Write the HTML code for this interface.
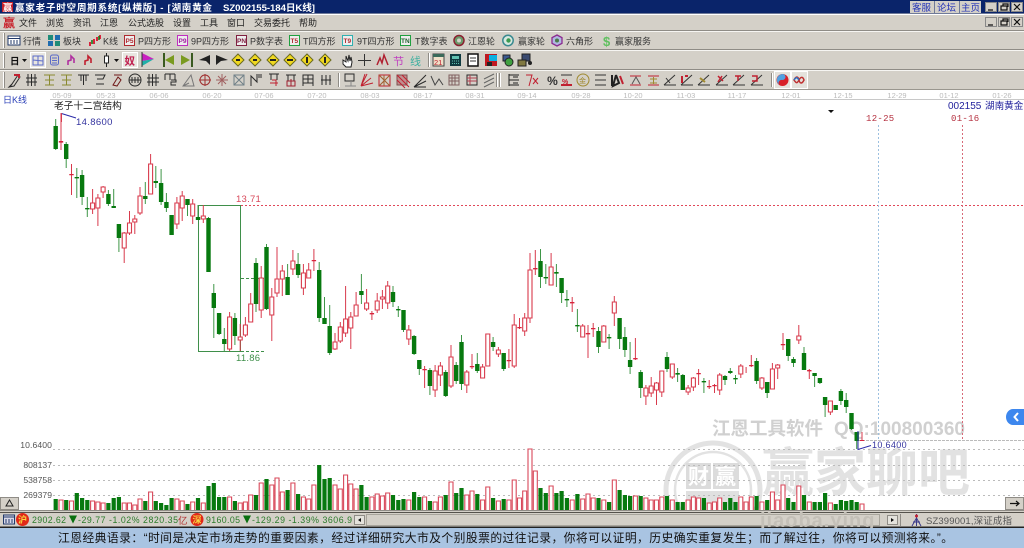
<!DOCTYPE html>
<html><head><meta charset="utf-8"><title>赢家老子时空周期系统</title>
<style>
html,body{margin:0;padding:0;background:#fff;width:1024px;height:548px;overflow:hidden}
svg{display:block;position:absolute;left:0;top:0}
text{font-family:"Liberation Sans","WenQuanYi Zen Hei","Noto Sans CJK SC",sans-serif}
.m{font-size:9px;fill:#222}
.t{font-size:9px;fill:#333}
.d{font-size:7.5px;fill:#bbb;text-anchor:middle;font-family:"Liberation Sans",sans-serif}
.mono{font-family:"Liberation Mono","WenQuanYi Zen Hei",monospace}
</style></head><body>
<svg width="1024" height="548" viewBox="0 0 1024 548" xmlns="http://www.w3.org/2000/svg">
<rect width="1024" height="548" fill="#fff"/>
<!-- watermark -->
<g fill="none" stroke="#e2e2e2">
<circle cx="713" cy="490" r="47" stroke-width="5"/><circle cx="713" cy="490" r="38" stroke-width="2.5"/>
</g>
<rect x="686" y="463" width="25" height="26" fill="#dcdcdc"/><rect x="713" y="463" width="26" height="26" fill="#dcdcdc"/>
<text x="688" y="484" font-size="21" fill="#fff" font-weight="bold">财</text>
<text x="715" y="484" font-size="21" fill="#fff" font-weight="bold">赢</text>
<rect x="686" y="491" width="53" height="20" fill="#e0e0e0"/>
<text x="762" y="491" font-size="52" font-weight="bold" fill="#e2e2e2">赢家聊吧</text>
<text x="712" y="435" font-size="18.5" font-weight="bold" fill="#d0d0d0">江恩工具软件</text>
<text x="834" y="435" font-size="19" font-weight="bold" fill="#d0d0d0">QQ:100800360</text>

<!-- grid -->
<g stroke="#bbb" stroke-dasharray="2 3" fill="none">
<path d="M53 449.5H1024M53 465.5H1024M53 480.5H1024M53 495.5H1024"/>
</g>
<path d="M858 440.5H1024" stroke="#bbb" stroke-dasharray="3 1"/>
<path d="M241 205.5H1024" stroke="#e0485a" stroke-dasharray="2 2"/>
<path d="M878.5 125V440" stroke="#9cc0e0" stroke-dasharray="2 2"/>
<path d="M962.5 125V440" stroke="#d86a78" stroke-dasharray="2 2"/>
<path d="M198.5 205.5H240.5V351.5H198.5Z" fill="none" stroke="#3f8f4a"/>
<path d="M241 278.5H266M241 351.5H266" stroke="#3f8f4a" stroke-dasharray="3 2"/>

<!-- candles: green wicks -->
<path fill="none" stroke="#3f9648" stroke-width="1" d="M55.7 119V150M66.2 142V168M76.8 168V198M82.1 170V205M87.3 197V217M108.4 190V206M113.7 189V208M118.9 224V252M145.3 182V204M155.8 166V188M161.1 169V205M166.4 193V212M171.6 215V235M187.5 199V216M198 205V220M208.5 217V272M213.8 284V338M219.1 313V335M224.3 328V351M234.9 313V345M256 258V312M266.5 244V310M287.6 264V295M298.1 253V278M319.2 262V322M324.5 297V324M329.7 305V355M361.4 274V304M393 286V307M398.3 306V317M403.5 310V332M414.1 335V355M419.3 360V375M429.9 368V395M445.7 370V397M456.2 362V384M461.5 335V390M477.3 353V373M493.1 337V351M503.7 353V371M540.5 249V288M545.8 264V284M556.4 264V287M561.6 278V303M566.9 290V307M577.4 309V332M598.5 327V353M609.1 334V349M619.6 318V349M624.9 327V357M630.1 342V374M640.7 370V398M667 352V372M677.6 368V382M682.8 374V390M703.9 378V393M725 375V385M730.3 368V374M735.5 375V384M756.6 358V384M767.2 382V398M788.2 339V361M793.5 357V367M804 347V370M814.6 373V387M819.9 378V384M825.1 397V417M835.7 405V410M840.9 389V405M846.2 393V413M851.5 413V430M856.7 432V449"/>
<!-- green bodies -->
<path fill="none" stroke="#07790f" stroke-width="4.4" d="M55.7 126V149M66.2 144V159M76.8 177V178.4M82.1 175V197M87.3 208V209.4M108.4 194V204M113.7 206V208M118.9 224V238M145.3 196V199M155.8 181V183M161.1 183V202M166.4 202V208M171.6 215V235M187.5 199V205M198 217V220M208.5 218V272M213.8 293V308M219.1 313V334M224.3 339V344M234.9 318V336M256 263V304M266.5 247V309M287.6 277V295M298.1 264V275M319.2 270V318M324.5 318V324M329.7 326V353M361.4 291V295M393 292V302M398.3 309V310.4M403.5 310V330M414.1 336V354M419.3 360V369M429.9 370V386M445.7 372V396M456.2 365V381M461.5 342V384M477.3 364V371M493.1 342V347M503.7 353V369M540.5 261V277M545.8 277V278.4M556.4 272V273.6M561.6 278V293M566.9 299V300.4M577.4 325V326.4M598.5 331V347M609.1 337V338.4M619.6 318V339M624.9 337V350M630.1 360V367M640.7 372V388M667 357V369M677.6 373V374.6M682.8 375V390M703.9 381V382.4M725 376V380M730.3 371V373M735.5 378V379.4M756.6 361V381M767.2 382V393M788.2 339V356M793.5 359V363M804 353V370M814.6 373V376M819.9 378V383M825.1 397V405M835.7 405V410M840.9 391V401M846.2 400V407M851.5 413V429M856.7 432V441"/>
<!-- red wicks -->
<path fill="none" stroke="#d83a4c" stroke-width="1" d="M61 113V150M71.5 164V195M92.6 189V214M97.9 194V226M103.1 186V198M124.2 232V263M129.5 211V235M134.8 215V234M140 187V215M150.6 154V194M176.9 197V229M182.2 191V221M192.7 199V224M203.3 205V223M229.6 312V351M240.2 324V351M245.4 317V337M250.7 293V322M261.2 266V318M271.8 288V341M277 247V297M282.3 265V296M292.9 250V275M303.4 264V295M308.7 263V278M313.9 249V271M335 333V350M340.3 322V343M345.6 286V337M350.8 312V349M356.1 292V316M366.6 289V311M371.9 311V320M377.2 293V313M382.4 290V309M387.7 281V309M408.8 325V345M424.6 366V388M435.1 365V397M440.4 362V386M451 345V388M466.8 370V393M472 354V369M482.6 364V378M487.8 334V366M498.4 347V357M508.9 349V368M514.2 314V368M519.5 318V329M524.7 313V336M530 253V323M535.3 250V275M551.1 253V285M572.2 297V312M582.7 324V337M588 325V358M593.2 323V337M603.8 325V342M614.3 296V326M635.4 338V360M645.9 385V405M651.2 377V397M656.5 382V405M661.8 371V397M672.3 364V379M688.1 385V395M693.4 377V391M698.6 369V385M709.2 380V389M714.5 384V393M719.7 373V395M740.8 364V378M746.1 367V373M751.3 355V367M761.9 377V390M772.4 363V389M777.7 364V379M783 333V350M798.8 325V344M809.3 369V379M830.4 401V415M862 432V441"/>
<!-- red doji -->
<path fill="none" stroke="#d8243c" stroke-width="4.4" d="M61 141V142.6M71.5 174V175.2M313.9 260V261.2M371.9 313V314.4M424.6 369V370.2M472 366V367.2M508.9 360V361.2M519.5 327V328.2M535.3 268V269.4M572.2 302V303.4M588 333V334.4M593.2 328V329.2M635.4 358V359.4M698.6 373V374.2M709.2 386V387.2M714.5 385V386.2M751.3 365V366.2M783 344V345.2M809.3 370V371.4M862 440V441"/>
<!-- red hollow bodies -->
<path fill="#fff" stroke="#d83a4c" stroke-width="1.1" d="M90.6 203h4V209h-4zM95.9 198h4V208h-4zM101.1 187h4V192h-4zM122.2 233h4V248h-4zM127.5 223h4V233h-4zM132.8 219h4V222h-4zM138 196h4V213h-4zM148.6 164h4V194h-4zM174.9 203h4V224h-4zM180.2 196h4V208h-4zM190.7 204h4V216h-4zM201.3 216h4V219h-4zM227.6 317h4V349h-4zM238.2 337h4V340h-4zM243.4 325h4V335h-4zM248.7 304h4V322h-4zM259.2 278h4V310h-4zM269.8 297h4V315h-4zM275 279h4V293h-4zM280.3 271h4V279h-4zM290.9 261h4V269h-4zM301.4 273h4V288h-4zM306.7 270h4V278h-4zM333 342h4V349h-4zM338.3 327h4V341h-4zM343.6 319h4V333h-4zM348.8 317h4V328h-4zM354.1 305h4V316h-4zM364.6 303h4V309h-4zM375.2 301h4V310h-4zM380.4 297h4V299h-4zM385.7 286h4V303h-4zM406.8 330h4V339h-4zM433.1 371h4V390h-4zM438.4 366h4V375h-4zM449 357h4V386h-4zM464.8 372h4V385h-4zM480.6 367h4V378h-4zM485.8 334h4V366h-4zM496.4 350h4V354h-4zM512.2 325h4V366h-4zM522.7 318h4V331h-4zM528 270h4V318h-4zM549.1 267h4V285h-4zM580.7 326h4V337h-4zM601.8 326h4V342h-4zM612.3 302h4V313h-4zM643.9 388h4V396h-4zM649.2 386h4V393h-4zM654.5 383h4V390h-4zM659.8 371h4V392h-4zM670.3 364h4V377h-4zM686.1 388h4V392h-4zM691.4 378h4V387h-4zM717.7 375h4V390h-4zM738.8 366h4V374h-4zM759.9 378h4V388h-4zM770.4 369h4V389h-4zM775.7 365h4V368h-4zM796.8 336h4V340h-4zM828.4 401h4V412h-4z"/>
<!-- volume green -->
<path fill="none" stroke="#07790f" stroke-width="4.2" d="M55.7 510V499M66.2 510V500M76.8 510V493M82.1 510V498M87.3 510V500M108.4 510V503M113.7 510V498M118.9 510V497M145.3 510V501M155.8 510V501M161.1 510V503M166.4 510V505M171.6 510V498M187.5 510V504M198 510V498M208.5 510V486M213.8 510V483M219.1 510V497M224.3 510V497M234.9 510V501M256 510V495M266.5 510V479M287.6 510V490M298.1 510V494M319.2 510V465M324.5 510V479M329.7 510V478M361.4 510V485M366.6 510V497M393 510V495M398.3 510V500M403.5 510V499M414.1 510V492M419.3 510V497M429.9 510V501M445.7 510V495M456.2 510V493M461.5 510V488M477.3 510V494M493.1 510V498M503.7 510V499M540.5 510V488M545.8 510V493M556.4 510V493M561.6 510V491M566.9 510V498M577.4 510V494M598.5 510V498M609.1 510V502M619.6 510V490M624.9 510V495M630.1 510V496M640.7 510V496M667 510V496M677.6 510V502M682.8 510V502M703.9 510V498M725 510V502M730.3 510V498M735.5 510V502M756.6 510V496M767.2 510V500M788.2 510V498M793.5 510V502M804 510V495M814.6 510V502M819.9 510V502M825.1 510V493M835.7 510V504M840.9 510V500M846.2 510V501M851.5 510V500M856.7 510V502"/>
<!-- volume red -->
<path fill="#fff" stroke="#d8485a" stroke-width="1.1" d="M59 510V500h4V510M69.5 510V501h4V510M90.6 510V501h4V510M95.9 510V502h4V510M101.1 510V503h4V510M122.2 510V503h4V510M127.5 510V503h4V510M132.8 510V505h4V510M138 510V499h4V510M148.6 510V492h4V510M174.9 510V499h4V510M180.2 510V501h4V510M190.7 510V502h4V510M201.3 510V503h4V510M227.6 510V497h4V510M238.2 510V503h4V510M243.4 510V502h4V510M248.7 510V495h4V510M259.2 510V483h4V510M269.8 510V485h4V510M275 510V478h4V510M280.3 510V492h4V510M290.9 510V483h4V510M301.4 510V497h4V510M306.7 510V499h4V510M311.9 510V485h4V510M333 510V485h4V510M338.3 510V489h4V510M343.6 510V475h4V510M348.8 510V484h4V510M354.1 510V489h4V510M369.9 510V497h4V510M375.2 510V494h4V510M380.4 510V496h4V510M385.7 510V493h4V510M406.8 510V500h4V510M422.6 510V497h4V510M433.1 510V502h4V510M438.4 510V497h4V510M449 510V482h4V510M464.8 510V495h4V510M470 510V491h4V510M480.6 510V500h4V510M485.8 510V487h4V510M496.4 510V501h4V510M506.9 510V500h4V510M512.2 510V480h4V510M517.5 510V498h4V510M522.7 510V491h4V510M528 510V449h4V510M533.3 510V471h4V510M549.1 510V486h4V510M570.2 510V500h4V510M580.7 510V499h4V510M586 510V494h4V510M591.2 510V498h4V510M601.8 510V500h4V510M612.3 510V480h4V510M633.4 510V496h4V510M643.9 510V498h4V510M649.2 510V500h4V510M654.5 510V500h4V510M659.8 510V497h4V510M670.3 510V500h4V510M686.1 510V500h4V510M691.4 510V497h4V510M696.6 510V498h4V510M707.2 510V503h4V510M712.5 510V502h4V510M717.7 510V498h4V510M738.8 510V497h4V510M744.1 510V502h4V510M749.3 510V497h4V510M759.9 510V502h4V510M770.4 510V492h4V510M775.7 510V500h4V510M781 510V485h4V510M796.8 510V486h4V510M807.3 510V502h4V510M828.4 510V503h4V510M860 510V504h4V510"/>

<!-- chart labels -->
<text x="54" y="109" font-size="9.7" fill="#222">老子十二宫结构</text>
<path d="M61.5 113.5L76 118" stroke="#2a2aa8" fill="none"/>
<path d="M61.5 113.5V122" stroke="#d83a4c"/>
<text x="76" y="125" font-size="9.5" fill="#33339f" letter-spacing=".35">14.8600</text>
<text x="948" y="109" font-size="10" fill="#22229c">002155</text>
<text x="985" y="109" font-size="9.6" fill="#22229c">湖南黄金</text>
<path d="M828 110h6l-3 3z" fill="#111"/>
<text x="866" y="121" font-size="9" fill="#b5303f" class="mono" letter-spacing=".3">12-25</text>
<text x="951" y="121" font-size="9" fill="#b5303f" class="mono" letter-spacing=".3">01-16</text>
<text x="236" y="202" font-size="9.5" fill="#d8485a" letter-spacing=".25">13.71</text>
<text x="236" y="361" font-size="9.5" fill="#3f8f4a" letter-spacing=".25">11.86</text>
<path d="M858 431V449.5L871 445.5" stroke="#2a2aa8" fill="none"/>
<text x="872" y="448" font-size="9" fill="#33339f" letter-spacing=".35">10.6400</text>
<g font-size="8.6" fill="#555" text-anchor="end">
<text x="52" y="448" letter-spacing=".1">10.6400</text>
<text x="52" y="468">808137</text>
<text x="52" y="483">538758</text>
<text x="52" y="498">269379</text>
</g>
<!-- blue tab -->
<path d="M1024 409h-11a7 8 0 0 0-7 8a7 8 0 0 0 7 8h11z" fill="#3d87ee"/>
<path d="M1018 413l-3.5 4 3.5 4" stroke="#fff" stroke-width="2" fill="none"/>

<!-- axis -->
<rect x="0" y="89" width="1024" height="10" fill="#fff"/>
<path d="M50 99.5H1024" stroke="#c8c8c8"/>
<text x="3" y="103" font-size="9" fill="#2a3fb8">日K线</text>
<g class="dd">
<text class="d" x="62" y="98">05-09</text><text class="d" x="106" y="98">05-23</text><text class="d" x="159" y="98">06-06</text><text class="d" x="212" y="98">06-20</text><text class="d" x="264" y="98">07-06</text><text class="d" x="317" y="98">07-20</text><text class="d" x="370" y="98">08-03</text><text class="d" x="423" y="98">08-17</text><text class="d" x="475" y="98">08-31</text><text class="d" x="527" y="98">09-14</text><text class="d" x="581" y="98">09-28</text><text class="d" x="633" y="98">10-20</text><text class="d" x="686" y="98">11-03</text><text class="d" x="737" y="98">11-17</text><text class="d" x="791" y="98">12-01</text><text class="d" x="843" y="98">12-15</text><text class="d" x="897" y="98">12-29</text><text class="d" x="949" y="98">01-12</text><text class="d" x="1002" y="98">01-26</text>
</g>

<!-- title bar -->
<rect x="0" y="0" width="1024" height="13.5" fill="#0a246a"/>
<rect x="2" y="2" width="11" height="10" fill="#c8202a"/>
<text x="3" y="11" font-size="9.5" fill="#fff" font-weight="bold">赢</text>
<text x="15" y="11" font-size="9.6" fill="#fff" font-weight="bold" textLength="197" lengthAdjust="spacing">赢家老子时空周期系统[纵横版] - [湖南黄金</text>
<text x="223" y="11" font-size="9.6" fill="#fff" font-weight="bold" textLength="92" lengthAdjust="spacing">SZ002155-184日K线]</text>
<g font-size="9.5" fill="#2232b8">
<rect x="910" y="1" width="24" height="12" fill="#d4d0c8"/><text x="912" y="11">客服</text>
<rect x="934.5" y="1" width="25" height="12" fill="#d4d0c8"/><text x="937" y="11">论坛</text>
<rect x="960" y="1" width="21" height="12" fill="#d4d0c8"/><text x="961" y="11">主页</text>
</g>
<!-- menu bar -->
<rect x="0" y="13.5" width="1024" height="76" fill="#d4d0c8"/>
<path d="M0 14.500H1024" stroke="#fff"/>
<path d="M0 30.500H1024M0 49.500H1024M0 69.500H1024" stroke="#8f8c86"/>
<path d="M0 31.500H1024M0 50.500H1024M0 70.500H1024" stroke="#f6f5f2"/>
<path d="M0 89.500H1024" stroke="#9a978f"/>
<g fill="#d4d0c8" stroke="#888">
<rect x="985.500" y="2.500" width="11" height="9"/><rect x="998.500" y="2.500" width="11" height="9"/><rect x="1011.500" y="2.500" width="11" height="9"/>
<rect x="985.500" y="17.500" width="11" height="9"/><rect x="998.500" y="17.500" width="11" height="9"/><rect x="1011.500" y="17.500" width="11" height="9"/>
</g>
<g stroke="#111" fill="none" stroke-width="1.2">
<path d="M988 10h5M988 25h5M1001 6h6v4h-6zM1003 6V4h5v3M1001 21h6v4h-6zM1003 21V19h5v3M1014 4l6 6M1020 4l-6 6M1014 19l6 6M1020 19l-6 6"/>
</g>
<text x="3" y="27" font-size="12" fill="#c8202a" font-weight="bold">赢</text>
<g class="menu">
<text class="m" x="19" y="26">文件</text><text class="m" x="46" y="26">浏览</text><text class="m" x="73" y="26">资讯</text><text class="m" x="100" y="26">江恩</text><text class="m" x="128" y="26">公式选股</text><text class="m" x="173" y="26">设置</text><text class="m" x="200" y="26">工具</text><text class="m" x="227" y="26">窗口</text><text class="m" x="254" y="26">交易委托</text><text class="m" x="299" y="26">帮助</text>
</g>
<!-- toolbar grips -->
<path d="M3.500 33V48M3.500 53V68M3.500 72V88" stroke="#fff"/><path d="M4.500 33V48M4.500 53V68M4.500 72V88" stroke="#8f8c86"/>
<!-- toolbar 1 -->
<rect x="8" y="36" width="12" height="9" fill="#fff" stroke="#223a6a"/><path d="M8 38.500h12M11 40v4M14 40v4M17 40v4" stroke="#223a6a"/>
<text class="t" x="23" y="44.500">行情</text>
<rect x="48" y="35" width="5" height="5" fill="#1f8c78"/><rect x="55" y="35" width="5" height="5" fill="#1f6cb0"/><rect x="48" y="41" width="5" height="5" fill="#1f6cb0"/><rect x="55" y="41" width="5" height="5" fill="#1f8c78"/>
<text class="t" x="63" y="44.500">板块</text>
<path d="M90 42v4M94 39v5M97 37v4M100 35v4" stroke="#d8243c" stroke-width="2"/><path d="M92 40v4M99 36v4" stroke="#07790f" stroke-width="1.5"/>
<text class="t" x="103" y="44.500">K线</text>
<g font-size="6.500" font-weight="bold">
<rect x="124.500" y="35.500" width="10" height="10" fill="#eee" stroke="#b02a30"/><text x="125.500" y="43" fill="#b02a30">P5</text>
<rect x="177.500" y="35.500" width="10" height="10" fill="#eee" stroke="#c030c0"/><text x="178.500" y="43" fill="#a020a0">P9</text>
<rect x="236.500" y="35.500" width="10" height="10" fill="#eee" stroke="#802040"/><text x="237" y="43" fill="#802040">PN</text>
<rect x="289.500" y="35.500" width="10" height="10" fill="#eee" stroke="#20a040"/><text x="290.500" y="43" fill="#b02a30">T5</text>
<rect x="342.500" y="35.500" width="10" height="10" fill="#eee" stroke="#30b0b0"/><text x="343.500" y="43" fill="#b02a30">T9</text>
<rect x="400.500" y="35.500" width="10" height="10" fill="#eee" stroke="#20a040"/><text x="401" y="43" fill="#206030">TN</text>
</g>
<text class="t" x="138" y="44.500">P四方形</text>
<text class="t" x="191" y="44.500">9P四方形</text>
<text class="t" x="250" y="44.500">P数字表</text>
<text class="t" x="303" y="44.500">T四方形</text>
<text class="t" x="357" y="44.500">9T四方形</text>
<text class="t" x="415" y="44.500">T数字表</text>
<circle cx="459" cy="40.500" r="5" fill="#6a9a6a" stroke="#8a2030" stroke-width="1.5"/><circle cx="459" cy="40.500" r="2" fill="#d4d0c8"/>
<text class="t" x="468" y="44.500">江恩轮</text>
<circle cx="508" cy="40.500" r="5.2" fill="#d8e8e0" stroke="#3a8a90" stroke-width="1.5"/><circle cx="508.500" cy="40.500" r="2.2" fill="#3a9a50"/>
<text class="t" x="518" y="44.500">赢家轮</text>
<path d="M557 35l5 2.700v5.600l-5 2.700-5-2.700v-5.600z" fill="#b0b8e0" stroke="#8a2a90" stroke-width="1.3"/><circle cx="557" cy="40.500" r="2" fill="#4a7a4a"/>
<text class="t" x="566" y="44.500">六角形</text>
<text x="603" y="46" font-size="13" font-weight="bold" fill="#60c060">$</text>
<text class="t" x="615" y="44.500">赢家服务</text>

<!-- toolbar 2 -->
<text x="10" y="64.500" font-size="9.500" fill="#111" font-weight="bold">日</text>
<path d="M22 59h5l-2.500 3z" fill="#111"/>
<rect x="30.500" y="52.500" width="15" height="15" fill="#e8e6e0" stroke="#fff"/>
<path d="M33 56h10v9h-10zM33 60l10 1M38 56v9" fill="none" stroke="#5a6ac8"/>
<rect x="50.500" y="55" width="8" height="10" rx="2" fill="none" stroke="#5a6ac8"/><path d="M52 58h5M52 60.500h5M52 63h5" stroke="#5a6ac8"/>
<path d="M68 65v-4l3-1v-4l3 3v4" fill="none" stroke="#b030a0" stroke-width="1.600"/>
<path d="M85 65v-4l3-1v-4l3 3v4" fill="none" stroke="#c02030" stroke-width="1.600"/>
<path d="M106.500 53v14" stroke="#222"/><rect x="104.500" y="56" width="4" height="7" fill="#fff" stroke="#222"/>
<path d="M114 59h5l-2.500 3z" fill="#111"/>
<rect x="122.500" y="52.500" width="15" height="15" fill="#e8e6e0" stroke="#fff"/>
<text x="124.500" y="64.500" font-size="10.500" fill="#c02050" font-weight="bold">奴</text>
<path d="M142 53l12 6-12 2z" fill="#c820c0"/><path d="M142 61l12-2-12 7z" fill="#20b0a8"/><path d="M142 52v15" stroke="#333"/>
<path d="M174 55l-9 5 9 5z" fill="#7a9a20"/><path d="M163 53h2v14h-2z" fill="#3a5a20"/>
<path d="M181 55l9 5-9 5z" fill="#7a9a20"/><path d="M191 53h2v14h-2z" fill="#3a5a20"/>
<path d="M210 55l-11 5 7 1 4 4z" fill="#222"/>
<path d="M216 55l12 5-7 1-5 4z" fill="#222"/>
<g fill="#f0d820" stroke="#6a6a20"><path d="M238 54l6 6-6 6-6-6zM255 54l6 6-6 6-6-6zM273 54l6 6-6 6-6-6zM290 54l6 6-6 6-6-6zM307 54l6 6-6 6-6-6zM325 54l6 6-6 6-6-6z"/></g>
<g fill="#222"><rect x="236" y="59" width="4" height="2"/><rect x="253" y="59" width="4" height="2"/><rect x="270" y="59" width="6" height="2"/><rect x="287" y="59" width="6" height="2"/><rect x="306" y="57" width="2" height="6"/><rect x="324" y="57" width="2" height="6"/></g>
<path d="M343 60v4l3 3h5l1-5-1-5-1 4-1-6-1 6-2-5v6z" fill="#fff" stroke="#222"/>
<path d="M364.500 54v12M358 60.500h13" stroke="#333"/>
<path d="M377 65l3-7 2 5 2-8 4 10" fill="none" stroke="#b02030" stroke-width="1.500"/>
<text x="393" y="65" font-size="11" fill="#c040c0">节</text>
<text x="410" y="65" font-size="11" fill="#40b0a0">线</text>
<path d="M428.500 53v14" stroke="#8f8c86"/><path d="M429.500 53v14" stroke="#fff"/>
<rect x="433" y="54" width="11" height="12" fill="#f0e0c8" stroke="#444"/><rect x="433" y="54" width="11" height="3" fill="#3a6a5a"/><text x="434" y="65" font-size="7.500" fill="#c02030">21</text>
<rect x="450" y="54" width="11" height="12" fill="#103a40"/><rect x="452" y="56" width="7" height="3" fill="#60c0b0"/><path d="M452 61h7M452 63.500h7" stroke="#60c0b0" stroke-dasharray="1 1"/>
<rect x="468" y="54" width="10" height="12" fill="#fff" stroke="#111" stroke-width="1.500"/><path d="M470 58h6M470 61h6" stroke="#333"/>
<rect x="485" y="54" width="12" height="12" fill="#c01820"/><rect x="489" y="55" width="8" height="6" fill="#10b0e0"/><rect x="487" y="62" width="5" height="4" fill="#222"/>
<rect x="503" y="55" width="7" height="6" fill="#3a5a90" stroke="#222"/><circle cx="509" cy="62" r="4" fill="#40a040" stroke="#222"/>
<rect x="522" y="54" width="8" height="7" fill="#3a4a70" stroke="#222"/><rect x="518" y="60" width="8" height="6" fill="#807840" stroke="#222"/><circle cx="530" cy="63" r="2" fill="#222"/>

<!-- toolbar 3 -->
<g fill="none" stroke="#2a2a2a">
<path d="M9 87l3-3 6-9 2 2-6 9zM12 84l-2 3"/><path d="M14 75h5v3" stroke="#c02030" stroke-width="2"/>
<path d="M26 78h11M26 82h11M28 74v12M31.500 74v12M35 74v12"/>
<path d="M44 75h11M49.500 75v3M45 80h9M45 85h9M49.500 78v7" stroke="#8a8a30"/>
<path d="M61 75h11M66.500 75v3M62 80h9M62 85h9M66.500 78v7" stroke="#8a8a30"/>
<path d="M78 75h11M81 75v6M86 75v6M83.500 75v10"/>
<path d="M95 75h10l-2 4h-6M96 84h8"/>
<path d="M113 85l5-8 3 3-4 6zM114 75h8" stroke="#701818"/>
<circle cx="135" cy="80" r="6"/><path d="M129 80h12M132 77v6M135 77v6M138 77v6"/>
<path d="M147 78h12M147 82h12M149 74v12M152.500 74v12M156 74v12"/>
<path d="M165 74h10M165 74v6M170 74v6M175 74v6M171 80h5v2h-5v3h5"/>
<path d="M183 86l8-11 3 11zM183 86l6-3" stroke="#777"/>
<circle cx="205" cy="80" r="5" stroke="#a03030"/><path d="M199 80h12M205 74v12" stroke="#a03030"/>
<path d="M216 80h12M222 74v12M218 76l8 8M226 76l-8 8" stroke="#a06060"/>
<rect x="234" y="75" width="10" height="10" stroke="#708088"/><path d="M234 75l10 10M244 75l-10 10" stroke="#708088"/>
<path d="M251 86v-10l6 6v-8M259 74v4M261 74v4"/>
<path d="M269 74h10M271 74v6M277 74v6"/><path d="M272 80h4v6M270 83h8" stroke="#c02030"/>
<path d="M286 75h10M288 75v6M294 75v6"/><path d="M287 81h8v5h-8zM291 79v7" stroke="#a02030"/>
<rect x="303" y="75" width="10" height="8"/><path d="M303 79h10M308 75v8M303 83v3M313 83v3"/>
<path d="M321 80h10M322 75v10M326 75v10M330 75v10"/>
<path d="M338.500 73v14" stroke="#8f8c86"/><path d="M339.500 73v14" stroke="#fff"/>
<rect x="345" y="74" width="9" height="7"/><path d="M351 81v5M345 86h11" stroke="#888"/>
<path d="M361 86l6-12M361 86l10-8M361 86l12-3M361 86l4-12" stroke="#c02030"/>
<rect x="379" y="75" width="11" height="11" stroke="#c02030"/><path d="M379 86l11-11M379 75l11 11M384 75v11" stroke="#a06030"/>
<rect x="397" y="75" width="10" height="10" stroke="#805050" fill="#c09090"/><path d="M397 75l12 12M397 80l8 8M402 75l8 8" stroke="#c02030"/>
<path d="M414 87l12-12M414 87l12-6M414 87h12"/>
<path d="M431 76l4 9 4-6 4 6" stroke="#444"/>
<rect x="449" y="75" width="10" height="10" stroke="#806060"/><path d="M449 78h10M449 81h10M452 75v10M455 75v10" stroke="#806060"/>
<rect x="467" y="75" width="10" height="10"/><path d="M467 78h10M467 81h10M470 75v10" stroke="#b04050"/>
<path d="M484 79l10-5M484 83l10-5M484 87l10-5" stroke="#666"/>
</g>
<path d="M496.500 73v14M499.500 73v14" stroke="#8f8c86"/><path d="M497.500 73v14M500.500 73v14" stroke="#fff"/>
<g fill="none" stroke="#222">
<path d="M509 74v12M509 75h10M509 80h10M509 85h10M513 77h5M513 83h5"/>
<path d="M526 75h6l-3 11M533 78l5 6M538 78l-5 6" stroke="#c02030"/>
<path d="M561 75h11" stroke="#333"/><path d="M561 85h11" stroke="#c02030" stroke-width="2"/>
<circle cx="583" cy="80" r="6" stroke="#a08a30"/>
<path d="M595 75h11M595 80h11M595 85h11" stroke="#333"/>
<path d="M612 75v11M616 75l-3 11 6-3-3-8" stroke="#222" stroke-width="2"/><path d="M620 76l3 8" stroke="#c02030" stroke-width="2"/>
<path d="M630 76h11M630 85h11" stroke="#c02030"/><path d="M632 84l4-7 4 7" stroke="#555"/>
<path d="M648 76h11M648 85h11" stroke="#c02030"/><path d="M650 79h7M650 83h7M653.500 77v7" stroke="#a08a30"/>
<path d="M664 85h12M664 85l11-10M666 78l4 5" stroke="#333"/>
<path d="M681 85h12M681 85l11-10" stroke="#333"/><path d="M682 76v7M685 76h3" stroke="#c02030" stroke-width="2"/>
<path d="M698 85h12M698 85l11-10" stroke="#333"/><path d="M700 78l5 4" stroke="#a08a30" stroke-width="2"/>
<path d="M716 85h12M716 85l11-10" stroke="#333"/><path d="M718 76l5 5M722 76l-4 6" stroke="#c02030" stroke-width="1.500"/>
<path d="M733 85h12M733 85l11-10" stroke="#333"/><path d="M735 76h6M738 76v5" stroke="#c02030" stroke-width="1.500"/>
<path d="M751 85h12M751 85l11-10" stroke="#333"/><path d="M752 76h5v5h-5" stroke="#c02030" stroke-width="1.500"/>
</g>
<text x="552.500" y="85" font-size="12" font-weight="bold" fill="#333" text-anchor="middle">%</text>
<text x="562" y="84" font-size="7" font-weight="bold" fill="#c02030">%</text>
<text x="579" y="83" font-size="7" fill="#a08a30">金</text>
<path d="M771.500 73v14" stroke="#8f8c86"/><path d="M772.500 73v14" stroke="#fff"/>
<rect x="774.500" y="71.500" width="16" height="17" fill="#e4e2dc" stroke="#fff"/><rect x="791.500" y="71.500" width="16" height="17" fill="#e4e2dc" stroke="#fff"/>
<circle cx="782.500" cy="80" r="6" fill="#d82028"/><path d="M782.500 74a6 6 0 0 0-3 11a3 3 0 0 1 3-5a3 3 0 0 0 0-6z" fill="#50a0e0"/>
<path d="M794 80c2-4 4-4 5 0s3 4 5 0c-1-3-3-4-5 0s-3 3-5 0z" fill="none" stroke="#c03030" stroke-width="1.500"/><path d="M794 80c2-3 3-3 5 0" fill="none" stroke="#3070c0" stroke-width="1.500"/>

<!-- bottom buttons -->
<rect x="0.500" y="497.500" width="18" height="12" fill="#d4d0c8" stroke="#8f8c86"/><path d="M6 506h7l-3.500-6z" fill="none" stroke="#222"/>
<rect x="1005.500" y="497.500" width="18" height="12" fill="#d4d0c8" stroke="#8f8c86"/><path d="M1010 503.500h9M1016 501l3 2.500-3 2.500" fill="none" stroke="#111" stroke-width="1.200"/>
<path d="M0 510.500H1024" stroke="#8f8c86"/>

<!-- status bar -->
<rect x="0" y="511" width="1024" height="17" fill="#d4d0c8"/>
<rect x="0" y="526.500" width="1024" height="1.500" fill="#222"/>
<path d="M0 512.500H1024" stroke="#55524c" stroke-width="1"/>
<rect x="3.500" y="515" width="11" height="9" fill="#d8d8e8" stroke="#223a6a"/><path d="M3.500 517h11M6 519v4M9 519v4M12 519v4" stroke="#223a6a"/>
<circle cx="22.500" cy="519.500" r="6.500" fill="#e02818"/><text x="18" y="523" font-size="9" fill="#f8d840" font-weight="bold">沪</text>
<text x="32" y="523" font-size="8.800" fill="#2a7a2a" textLength="34" lengthAdjust="spacing">2902.62</text>
<path d="M69 515.500h8l-4 8z" fill="#0a7010"/>
<text x="78" y="523" font-size="8.800" fill="#2a7a2a" textLength="100" lengthAdjust="spacing">-29.77 -1.02% 2820.35</text>
<text x="178" y="524" font-size="9.500" fill="#b03030">亿</text>
<circle cx="197" cy="519.500" r="6.500" fill="#e02818"/><text x="192.500" y="523" font-size="9" fill="#f8d840" font-weight="bold">深</text>
<text x="206" y="523" font-size="8.800" fill="#2a7a2a" textLength="34" lengthAdjust="spacing">9160.05</text>
<path d="M243 515.500h8l-4 8z" fill="#0a7010"/>
<text x="252" y="523" font-size="8.800" fill="#2a7a2a" textLength="100" lengthAdjust="spacing">-129.29 -1.39% 3606.9</text>
<!-- scrollbar -->
<rect x="354" y="513" width="546" height="13" fill="#d4d0c8"/>
<rect x="354.500" y="515.500" width="10" height="9" fill="#e4e2dc" stroke="#8f8c86"/><path d="M361 518v4l-3-2z" fill="#111"/>
<rect x="366.500" y="514.500" width="513" height="11" fill="#d4d0c8" stroke="#a8a59c"/>
<rect x="887.500" y="515.500" width="10" height="9" fill="#e4e2dc" stroke="#8f8c86"/><path d="M891 518v4l3-2z" fill="#111"/>
<text x="760" y="527" font-size="20" fill="#c4c0b8" font-weight="bold" letter-spacing="1">jiaoba.ying</text>
<path d="M900.500 514v12" stroke="#8f8c86"/>
<path d="M916.500 514v12M912 526l4.500-8 4.500 8M913 522h7" stroke="#3a3a8a" fill="none"/><circle cx="916.500" cy="516" r="1.500" fill="#c02030"/>
<text x="926" y="524" font-size="9.500" fill="#555" textLength="86" lengthAdjust="spacing">SZ399001,深证成指</text>

<!-- quote bar -->
<rect x="0" y="528" width="1024" height="20" fill="#a9c4e2"/>
<text x="58" y="542" font-size="11.800" fill="#111" textLength="895" lengthAdjust="spacing">江恩经典语录：“时间是决定市场走势的重要因素，经过详细研究大市及个别股票的过往记录，你将可以证明，历史确实重复发生；而了解过往，你将可以预测将来。”。</text>
</svg>
</body></html>
